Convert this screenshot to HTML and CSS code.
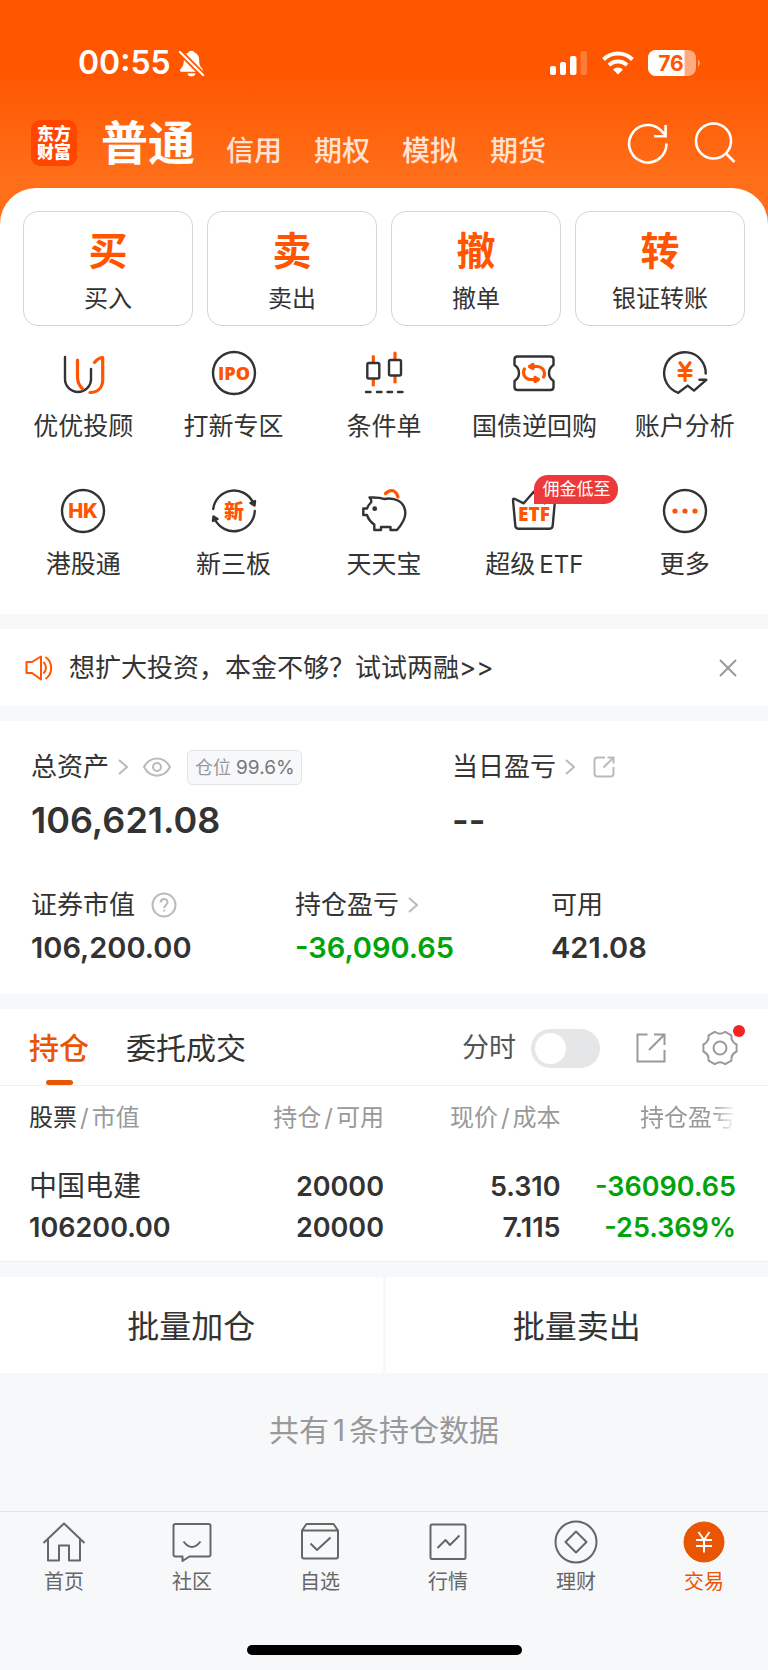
FILE: index.html
```html
<!DOCTYPE html>
<html lang="zh-CN">
<head>
<meta charset="utf-8">
<meta name="viewport" content="width=device-width, initial-scale=1">
<title>交易</title>
<link rel="stylesheet" href="styles.css">
</head>
<body>
<header class="top">
  <div class="status">
    <div class="status-left">
      <span class="clock">00:55</span>
      <svg width="27" height="27" viewBox="0 0 28 28">
        <path fill="#fff" d="M14 .8c-1.700 0-2.700.8-3.200 1.800C7.500 4 6 6.800 6 10.500c0 5-1.200 6.500-2.800 8.300-1.700 1.900-1.500 3.700.6 3.700h20.400c2.100 0 2.300-1.800.6-3.700-1.600-1.800-2.800-3.300-2.800-8.300 0-3.700-1.500-6.500-4.800-7.900C16.700 1.600 15.700.8 14 .8zM9.800 24h8.400c-.5 2.200-2 3.300-4.200 3.300S10.300 26.200 9.800 24z"/>
        <path stroke="#ff5600" stroke-width="6" d="M1 1l26 26"/>
        <path stroke="#fff" stroke-width="2.200" stroke-linecap="round" d="M2 2l24 24"/>
      </svg>
    </div>
    <div class="status-right">
      <svg width="38" height="24" viewBox="0 0 38 24" fill="#fff">
        <rect x="0" y="15" width="6" height="9" rx="2"/><rect x="10" y="11" width="6" height="13" rx="2"/><rect x="20" y="5" width="6.500" height="19" rx="2"/><rect x="30.500" y="0" width="6.500" height="24" rx="2" opacity=".22"/>
      </svg>
      <svg width="32" height="24" viewBox="0 0 32 24" fill="none" stroke="#fff" stroke-width="4">
        <path d="M1.500 8.500a20.500 20.500 0 0 1 29 0"/><path d="M7 14.200a12.800 12.800 0 0 1 18 0"/><path fill="#fff" stroke="none" d="M16 23.500l-5-5a7 7 0 0 1 10 0z"/>
      </svg>
      <svg width="53" height="26" viewBox="0 0 53 26">
        <rect width="48" height="26" rx="8" fill="#fff" opacity=".5"/><path fill="#fff" d="M8 0h28.500v26H8a8 8 0 0 1-8-8V8a8 8 0 0 1 8-8z"/><path fill="#fff" opacity=".5" d="M50 9q4 4 0 8z"/>
        <text x="23" y="21" text-anchor="middle" class="battery-text">76</text>
      </svg>
    </div>
  </div>
  <nav class="accounts">
    <div class="logo">东方<br>财富</div>
    <a class="account-current" href="#">普通</a>
    <a class="account" href="#">信用</a>
    <a class="account" href="#">期权</a>
    <a class="account" href="#">模拟</a>
    <a class="account" href="#">期货</a>
    <div class="head-tools">
      <button class="icon-btn" aria-label="刷新"><svg width="42" height="42" viewBox="0 0 42 42" fill="none" stroke="#fff" stroke-width="2.600"><path d="M39.500 21.500A18.700 18.700 0 1 1 33.500 8L39 13.500"/><path d="M38.600 3v11.300H27"/></svg></button>
      <button class="icon-btn" aria-label="搜索"><svg width="42" height="42" viewBox="0 0 42 42" fill="none" stroke="#fff" stroke-width="2.600"><circle cx="19.500" cy="19" r="17.500"/><path d="M31.500 31l9 9"/></svg></button>
    </div>
  </nav>
</header>

<main>
  <section class="panel">
    <div class="actions">
      <button class="action"><b>买</b><span>买入</span></button>
      <button class="action"><b>卖</b><span>卖出</span></button>
      <button class="action"><b>撤</b><span>撤单</span></button>
      <button class="action"><b>转</b><span>银证转账</span></button>
    </div>
    <div class="services">
      <a class="service" href="#"><svg class="line" viewBox="0 0 48 48"><path d="M6 8V30a13 13 0 0 0 26 0V20"/><g class="hot"><path d="M18.500 11v17c0 5.500 1.500 8.500 5 11.700"/><path d="M31 43.500c8 0 12.700-5 12.700-13V8.500c-4 0-5.500 2-8.200 4.800"/></g></svg><span>优优投顾</span></a>
      <a class="service" href="#"><svg class="line" viewBox="0 0 48 48"><circle cx="24" cy="24" r="21"/><text x="24" y="30.500" class="ipo">IPO</text></svg><span>打新专区</span></a>
      <a class="service" href="#"><svg class="line" viewBox="0 0 48 48"><g class="hot"><path d="M13.300 7.500v5.500M13.300 31v5M35 4v6M35 27v6"/></g><rect x="7.300" y="14" width="12" height="15.500" rx="1.500"/><rect x="29" y="11" width="12" height="15.500" rx="1.500"/><path d="M6 43h4.500M17 43h4.500M27.500 43h4.500M38 43h4.500"/></svg><span>条件单</span></a>
      <a class="service" href="#"><svg class="line" viewBox="0 0 48 48"><path d="M4.500 10.500q0-3 3-3h33q3 0 3 3v5.500q-4.500 3-4.500 8t4.500 8v6q0 3-3 3h-33q-3 0-3-3V32q4.500-3 4.500-8t-4.500-8z"/><g class="hot"><path d="M21 17.500h6.500a7 7 0 0 1 7 7q0 2-1 3.500M27 30.500h-6.500a7 7 0 0 1-7-7q0-2 1-3.500"/><path class="solid" d="M19.500 17.500l3.500-2v4zM28.500 30.500l-3.500-2v4z"/></g></svg><span>国债逆回购</span></a>
      <a class="service" href="#"><svg class="line" viewBox="0 0 48 48"><path d="M44.700 24.500A20.800 20.800 0 1 0 17.300 43.800l9.400-7.200 6.300 5 12.300-10.800H38.500"/><g class="hot"><path d="M19 13.800l5 7 5-7M18 21.500h12M18 26.500h12M24 21v10.500"/></g></svg><span>账户分析</span></a>
      <a class="service" href="#"><svg class="line" viewBox="0 0 48 48"><circle cx="24" cy="24" r="21"/><text x="24" y="31" class="hk">HK</text></svg><span>港股通</span></a>
      <a class="service" href="#"><svg class="line" viewBox="0 0 48 48"><path d="M3.200 22A21 21 0 0 1 43 15.500M44.800 24A21 21 0 0 1 5 32.500"/><path class="dark-solid" d="M40.500 16l4.500-2-.5 4.500zM7.500 32l-4.500 2 .5-4.500z"/><text x="24" y="31.500" class="xin">新</text></svg><span>新三板</span></a>
      <a class="service" href="#"><svg class="line" viewBox="0 0 48 48"><path d="M24 12C19 10 15 10.500 9.500 10.500q3 3.500 1 5.500-3 3-3.500 5.500H3.300V28H7c1.500 4.500 3.500 7 7.300 9.500V43H21v-3h9.500v3h6.500c6-7 8.300-12 8.300-16.500C45.300 14 34 10 24 12z"/><circle class="dark-solid" cx="14.700" cy="21.700" r="1.200"/><path class="hot" d="M25.500 6.500c5-5 10.500-3.500 12.500 3.500"/></svg><span>天天宝</span></a>
      <a class="service" href="#"><svg class="line" viewBox="0 0 48 48"><path d="M3 13q0-2 2-1l8.700 4.300L24 4.500l10.300 11.800L43 12q2-1 2 1l-2.300 25.700q-.2 3-3 3H8.300q-2.800 0-3-3z"/><text x="24" y="34" class="etf">ETF</text></svg><i class="promo">佣金低至</i><span>超级<em>ETF</em></span></a>
      <a class="service" href="#"><svg class="line" viewBox="0 0 48 48"><circle cx="24" cy="24" r="21"/><g fill="#ff5500" stroke="none"><circle cx="14" cy="24" r="2.600"/><circle cx="24" cy="24" r="2.600"/><circle cx="34" cy="24" r="2.600"/></g></svg><span>更多</span></a>
    </div>
  </section>

  <section class="notice">
    <svg width="28" height="26" viewBox="0 0 28 26" fill="none" stroke="#ff5500" stroke-width="2" stroke-linejoin="round"><path d="M1.500 7H7l9-5.500v23L7 18H1.500z"/><path d="M18.500 7a8 8 0 0 1 0 11.500M20.500 2a13.500 13.500 0 0 1 0 22"/></svg>
    <a href="#">想扩大投资，本金不够？试试两融&gt;&gt;</a>
    <button class="icon-btn" aria-label="关闭"><svg width="18" height="18" viewBox="0 0 18 18" stroke="#999" stroke-width="2"><path d="M1 1l16 16M17 1L1 17"/></svg></button>
  </section>

  <section class="assets">
    <div class="assets-main">
      <div>
        <div class="label">总资产<svg class="chev" viewBox="0 0 10 16"><path d="M1 1l8 7-8 7"/></svg>
          <svg class="eye" viewBox="0 0 28 20"><path d="M1 10C7-1.500 21-1.500 27 10 21 21.500 7 21.500 1 10z"/><circle cx="14" cy="10" r="4"/></svg>
          <span class="chip">仓位 <em>99.6%</em></span></div>
        <div class="total">106,621.08</div>
      </div>
      <div>
        <div class="label">当日盈亏<svg class="chev" viewBox="0 0 10 16"><path d="M1 1l8 7-8 7"/></svg>
          <svg class="share" viewBox="0 0 22 22"><path d="M12 1.500H4.500q-3 0-3 3v13q0 3 3 3h13q3 0 3-3V11M10.500 11.500l10-10M14.500 1.500h6v6"/></svg></div>
        <div class="total">--</div>
      </div>
    </div>
    <div class="assets-sub">
      <div><div class="label">证券市值<svg class="help" viewBox="0 0 26 26"><circle cx="13" cy="13" r="11.500"/><path d="M9.700 10.500c0-4.500 6.800-4.500 6.800-.3 0 2.800-3.300 3-3.300 6M13.200 17.800v1.800"/></svg></div><div class="value">106,200.00</div></div>
      <div><div class="label">持仓盈亏<svg class="chev" viewBox="0 0 10 16"><path d="M1 1l8 7-8 7"/></svg></div><div class="value down">-36,090.65</div></div>
      <div><div class="label">可用</div><div class="value">421.08</div></div>
    </div>
  </section>

  <section class="holdings">
    <div class="tabs">
      <a class="tab tab-on" href="#">持仓</a>
      <a class="tab" href="#">委托成交</a>
      <div class="tab-tools">
        <label class="switch">分时<input type="checkbox"></label>
        <button class="icon-btn" aria-label="分享"><svg width="30" height="30" viewBox="0 0 30 30" fill="none" stroke="#999" stroke-width="2"><path d="M11.500 1.500h-10v27h27V17M18 1.500h10.500V12M13 17L28 2"/></svg></button>
        <button class="icon-btn gear" aria-label="设置"><svg width="36" height="36" viewBox="0 0 36 36" fill="none" stroke="#999" stroke-width="2" stroke-linejoin="round"><path d="M34.600 14.500V21.500Q28.800 24.300 29.400 30.600L23.300 34.200Q18 30.500 12.700 34.200L6.600 30.600Q7.200 24.300 1.400 21.500V14.500Q7.200 11.700 6.600 5.400L12.700 1.800Q18 5.500 23.300 1.800L29.400 5.400Q28.800 11.700 34.600 14.500z"/><circle cx="18" cy="18" r="6.500"/></svg></button>
      </div>
    </div>
    <table class="stocks">
      <colgroup><col class="c1"><col class="c2"><col class="c3"><col class="c4"></colgroup>
      <thead><tr><th><b>股票</b><i>/</i>市值</th><th>持仓<i>/</i>可用</th><th>现价<i>/</i>成本</th><th><span class="fade">持仓盈亏</span></th></tr></thead>
      <tbody><tr><td><span class="name">中国电建</span><br>106200.00</td><td>20000<br>20000</td><td>5.310<br>7.115</td><td class="down">-36090.65<br>-25.369%</td></tr></tbody>
    </table>
  </section>

  <div class="batch"><button>批量加仓</button><button>批量卖出</button></div>
  <p class="count">共有<span>1</span>条持仓数据</p>
</main>

<footer class="bottom">
  <nav class="menu">
    <a href="#"><svg viewBox="0 0 44 44"><path d="M1.500 23L22 3.500 42.500 23M6 19v21.500h11V25.500h10v15h11V19"/></svg>首页</a>
    <a href="#"><svg viewBox="0 0 44 44"><path d="M5.500 4h33q2 0 2 2v28.500q0 2-2 2H19.500L12.500 41v-4.500h-7q-2 0-2-2V6q0-2 2-2z"/><path d="M13.500 21.500q8.500 11 17 0"/></svg>社区</a>
    <a href="#"><svg viewBox="0 0 44 44"><path d="M4 10.500L8.500 4h27L40 10.500v26q0 2-2 2H6q-2 0-2-2zM4 10.500h36M12.500 23.500l6.500 6.500L32.500 17.500"/></svg>自选</a>
    <a href="#"><svg viewBox="0 0 44 44"><rect x="4.500" y="4.500" width="35" height="34.500" rx="1.500"/><path d="M11.500 28l8-8 4.500 5 9.500-9.500"/></svg>行情</a>
    <a href="#"><svg viewBox="0 0 44 44"><circle cx="22" cy="22" r="20.500"/><path d="M22 11.500L32.500 22 22 32.500 11.500 22z"/></svg>理财</a>
    <a class="menu-on" href="#"><svg viewBox="0 0 44 44"><circle cx="22" cy="22" r="20" fill="#ea5504" stroke="#ea5504" stroke-width="1"/><path stroke="#fff" d="M16.500 12l5.500 8 5.500-8M14 20h16M14 26h16M22 20v12.500"/></svg>交易</a>
  </nav>
  <div class="home-bar"></div>
</footer>
</body>
</html>
```

FILE: styles.css
```css
* { box-sizing: border-box; }
body {
  margin: 0;
  min-height: 100vh;
  display: flex;
  flex-direction: column;
  background: #f7f8fa;
  color: #333;
  font-family: Inter, "Noto Sans CJK SC", sans-serif;
  font-size: 25px;
}
a { color: inherit; text-decoration: none; }
button { font: inherit; color: inherit; background: none; border: 0; padding: 0; }
svg { display: block; flex: none; }
.icon-btn { display: block; }

/* header */
.top {
  height: 232px;
  padding-top: 39px;
  background: linear-gradient(#ff5600 0, #ff5600 70px, #ff6f1a 180px);
  color: #fff;
}
.status { display: flex; justify-content: space-between; align-items: center; height: 48px; padding: 0 67px 0 78px; }
.status-left { display: flex; align-items: center; gap: 7px; }
.status-right { display: flex; align-items: center; gap: 14px; }
.clock { font-size: 32px; font-weight: 600; line-height: 40px; }
.battery-text { font: 700 21px Inter, sans-serif; fill: #ff5600; }
.accounts { display: flex; align-items: center; height: 60px; margin-top: 26px; padding: 0 32px 0 31px; }
.logo {
  width: 46px; height: 46px; margin-right: 24px; padding-top: 5px;
  border-radius: 9px; background: #ff4500; text-align: center;
  font-size: 17px; font-weight: 900; line-height: 18px;
}
.account-current { margin-right: -1px; font-size: 47px; font-weight: 600; line-height: 60px; }
.account { margin: 16px 0 0 32px; font-size: 28px; font-weight: 500; line-height: 32px; color: #ffe3d4; }
.head-tools { display: flex; gap: 25px; margin-left: auto; }

/* quick actions and services */
.panel { position: relative; margin-top: -44px; padding: 23px 0 31px; border-radius: 36px 36px 0 0; background: #fff; }
.actions { display: grid; grid-template-columns: repeat(4, 1fr); gap: 14px; padding: 0 23px; }
.action {
  display: flex; flex-direction: column; align-items: center;
  height: 115px; padding-top: 16px; border: 1px solid #d6d6d6; border-radius: 15px;
}
.action b { font-size: 39px; font-weight: 600; line-height: 46px; color: #ff5500; }
.action span { margin-top: 9px; font-size: 24px; line-height: 32px; }
.services { display: grid; grid-template-columns: repeat(5, 1fr); row-gap: 42px; padding: 23px 8px 0; }
.service { position: relative; display: flex; flex-direction: column; align-items: center; gap: 12px; height: 96px; }
.service span { line-height: 34px; white-space: nowrap; }
.service em { margin-left: 4px; font-size: 24px; font-style: normal; }
.line { width: 48px; height: 48px; fill: none; stroke: #333; stroke-width: 2.400; stroke-linecap: round; stroke-linejoin: round; }
.line text { fill: #ff5500; stroke: none; text-anchor: middle; }
.line .hot { stroke: #ff5500; stroke-width: 3.200; }
.solid { fill: #ff5500; }
.dark-solid { fill: #333; }
.ipo { font: 800 18px "Open Sans", sans-serif; }
.hk { font: 800 20px Inter, sans-serif; }
.etf { font: 800 19px "Open Sans", sans-serif; }
.xin { font: 900 20px "Noto Sans CJK SC", sans-serif; }
.promo {
  position: absolute; left: 50%; top: -12px; padding: 0 8px;
  border-radius: 14px 14px 14px 0; background: #ec3a3c; color: #fff;
  font-size: 17px; font-style: normal; line-height: 29px; white-space: nowrap;
}

/* notice */
.notice { display: flex; align-items: center; height: 77px; margin-top: 15px; padding: 0 31px 0 25px; background: #fff; font-size: 26px; line-height: 36px; }
.notice a { flex: 1; margin-left: 16px; }

/* assets */
.assets { margin-top: 15px; padding: 28px 31px; background: #fff; }
.assets-main { display: grid; grid-template-columns: 421fr 285fr; }
.assets-sub { display: grid; grid-template-columns: 264fr 256fr 186fr; margin-top: 47px; }
.label { display: flex; align-items: center; height: 36px; font-size: 26px; line-height: 36px; }
.label svg { fill: none; stroke: #bbb; stroke-width: 2; }
.chev { width: 10px; height: 16px; margin-left: 9px; }
.eye { width: 28px; height: 20px; margin-left: 15px; }
.share { width: 22px; height: 22px; margin-left: 18px; }
.help { width: 26px; height: 26px; margin-left: 16px; }
.chip {
  margin-left: 16px; padding: 0 6px 0 7px; border: 1px solid #e3e4e8; border-radius: 5px;
  background: #f7f8fa; color: #999; font-size: 18px; line-height: 33px;
}
.chip em { font-size: 19px; font-style: normal; color: #777; }
.total { margin-top: 15px; font-size: 36px; font-weight: 600; line-height: 40px; }
.value { margin-top: 7px; font-size: 29px; font-weight: 600; line-height: 36px; }
.down { color: #00a30a; }

/* holdings */
.holdings { margin-top: 15px; background: #fff; border-bottom: 1px solid #eee; }
.tabs { display: flex; align-items: center; height: 77px; padding: 0 30px 0 29px; border-bottom: 1px solid #eee; }
.tab { position: relative; margin-right: 37px; padding-top: 2px; font-size: 30px; line-height: 74px; }
.tab-on { color: #ea5504; font-weight: 500; }
.tab-on::after {
  content: ""; position: absolute; left: 50%; bottom: 0; width: 27px; height: 5px;
  margin-left: -13px; border-radius: 3px; background: #ea5504;
}
.tab-tools { display: flex; align-items: center; gap: 36px; margin-left: auto; padding-top: 2px; }
.switch { display: flex; align-items: center; gap: 15px; font-size: 27px; line-height: 36px; color: #555; }
.switch input { appearance: none; position: relative; width: 69px; height: 39px; margin: 0; border-radius: 20px; background: #e5e6e8; }
.switch input::after { content: ""; position: absolute; left: 4px; top: 4px; width: 31px; height: 31px; border-radius: 50%; background: #fff; }
.gear { position: relative; }
.gear::after { content: ""; position: absolute; right: -7px; top: -5px; width: 12px; height: 12px; border-radius: 50%; background: #f62323; }
.stocks { width: 100%; table-layout: fixed; border-collapse: collapse; }
.c1 { width: 29%; }
.c2 { width: 21%; }
.c3 { width: 23%; }
.c4 { width: 27%; }
.stocks th, .stocks td { padding: 0; text-align: right; white-space: nowrap; }
.stocks th { padding-top: 14px; font-size: 24px; font-weight: 400; line-height: 36px; color: #999; }
.stocks th b { font-weight: 400; color: #333; }
.stocks th i { margin: 0 3px; font-style: normal; }
.stocks td { padding: 30px 0 13px; font-size: 27px; font-weight: 600; line-height: 41px; }
.stocks th:first-child, .stocks td:first-child { padding-left: 29px; text-align: left; }
.stocks th:last-child, .stocks td:last-child { padding-right: 32px; }
.name { font-size: 28px; font-weight: 400; }
.fade { -webkit-mask-image: linear-gradient(90deg, #000 75%, transparent); mask-image: linear-gradient(90deg, #000 75%, transparent); }
.batch { display: grid; grid-template-columns: 1fr 1fr; gap: 3px; margin-top: 15px; }
.batch button { height: 96px; padding-top: 3px; background: #fff; font-size: 32px; line-height: 40px; }
.count { margin: 37px 0; text-align: center; font-size: 30px; line-height: 40px; color: #999; }
.count span { margin: 0 4px; }

/* bottom navigation */
.bottom { margin-top: auto; height: 159px; border-top: 1px solid #e2e3e5; }
.menu { display: grid; grid-template-columns: repeat(6, 1fr); padding-top: 8px; }
.menu a { display: flex; flex-direction: column; align-items: center; gap: 4px; font-size: 20px; line-height: 28px; color: #666; }
.menu svg { width: 44px; height: 44px; fill: none; stroke: #666; stroke-width: 2; stroke-linejoin: round; }
.menu .menu-on { color: #ea5504; }
.home-bar { width: 275px; height: 10px; margin: 49px auto 0; border-radius: 5px; background: #000; }
```
